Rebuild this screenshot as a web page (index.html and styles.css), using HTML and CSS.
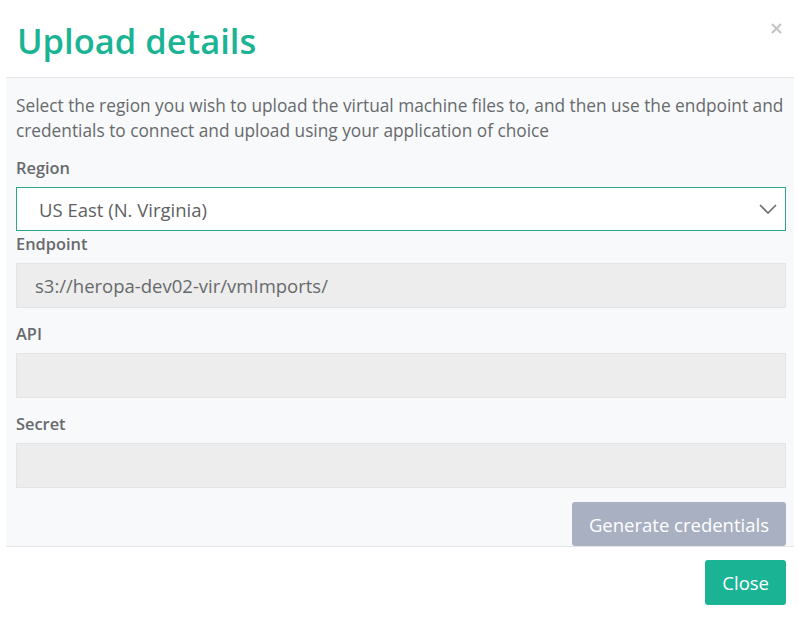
FILE: index.html
```html
<!DOCTYPE html>
<html lang="en">
<head>
    <meta charset="UTF-8">
    <meta name="viewport" content="width=device-width, initial-scale=1.0">
    <title>Upload details</title>
    <link rel="stylesheet" href="styles.css">
</head>
<body>
    <div class="modal">
        <div class="modal-header">
            <h1 class="modal-title">Upload details</h1>
            <button class="close" aria-label="Close">
                <svg width="11" height="11" viewBox="0 0 11 11"><path d="M1 1 L10 10 M10 1 L1 10" stroke="#c4c4c4" stroke-width="2" fill="none"/></svg>
            </button>
        </div>

        <div class="modal-body">
            <p class="intro">Select the region you wish to upload the virtual machine files to, and then use the endpoint and credentials to connect and upload using your application of choice</p>

            <label class="field-label">Region</label>
            <div class="select-box">
                <span>US East (N. Virginia)</span>
                <svg width="18" height="10" viewBox="0 0 18 10"><path d="M1 1 L9 9 L17 1" stroke="#6b6b6b" stroke-width="1.6" fill="none"/></svg>
            </div>

            <label class="field-label">Endpoint</label>
            <div class="input-box">s3://heropa-dev02-vir/vmImports/</div>

            <label class="field-label">API</label>
            <div class="input-box"></div>

            <label class="field-label">Secret</label>
            <div class="input-box"></div>

            <div class="actions">
                <button class="btn btn-disabled">Generate credentials</button>
            </div>
        </div>

        <div class="modal-footer">
            <button class="btn btn-primary">Close</button>
        </div>
    </div>
</body>
</html>
```

FILE: styles.css
```css
body {
    margin: 0;
    background: #fff;
    font-family: "Open Sans", Arial, sans-serif;
    color: #676a6c;
}
.modal {
    width: 798px;
    height: 618px;
    background: #fff;
}
.modal-header {
    display: flex;
    justify-content: space-between;
    align-items: flex-start;
    height: 77px;
    box-sizing: border-box;
    padding: 22px 16px 0 17px;
}
.modal-title {
    margin: 0;
    font-size: 34.5px;
    line-height: 37px;
    font-weight: 600;
    color: #1ab394;
}
.close {
    border: none;
    background: none;
    padding: 0;
    margin-top: 0;
    cursor: pointer;
}
.modal-body {
    margin: 0 4px 0 6px;
    padding: 15px 8px 0 10px;
    background: #f8f9fb;
    border-top: 1px solid #e3e5e8;
    border-bottom: 1px solid #e3e5e8;
}
.intro {
    margin: 0 -6px 14px 0;
    font-size: 17.3px;
    line-height: 25px;
}
.field-label {
    display: block;
    font-size: 16.4px;
    line-height: 22px;
    font-weight: 600;
    margin-bottom: 8px;
}
.select-box {
    display: flex;
    justify-content: space-between;
    align-items: center;
    height: 44px;
    box-sizing: border-box;
    padding: 0 8px 0 22px;
    background: #fff;
    border: 1px solid #2ba88a;
    font-size: 18.5px;
    color: #5e6163;
    margin-bottom: 2px;
}
.input-box {
    height: 45px;
    box-sizing: border-box;
    padding: 0 18px;
    display: flex;
    align-items: center;
    background: #ededed;
    border: 1px solid #e3e4e5;
    font-size: 18.5px;
    color: #676a6c;
    margin-bottom: 15px;
}
.actions {
    display: flex;
    justify-content: flex-end;
    margin-top: -1px;
}
.btn {
    border: none;
    border-radius: 3px;
    font-family: "Open Sans", Arial, sans-serif;
    font-size: 18.5px;
    color: #fff;
    height: 44px;
    padding: 0 17px;
}
.btn-disabled {
    background: #a8b0c1;
}
.btn-primary {
    background: #1ab394;
    height: 45px;
    padding: 0 17px;
}
.modal-footer {
    display: flex;
    justify-content: flex-end;
    padding: 13px 12px 0 0;
}
```
